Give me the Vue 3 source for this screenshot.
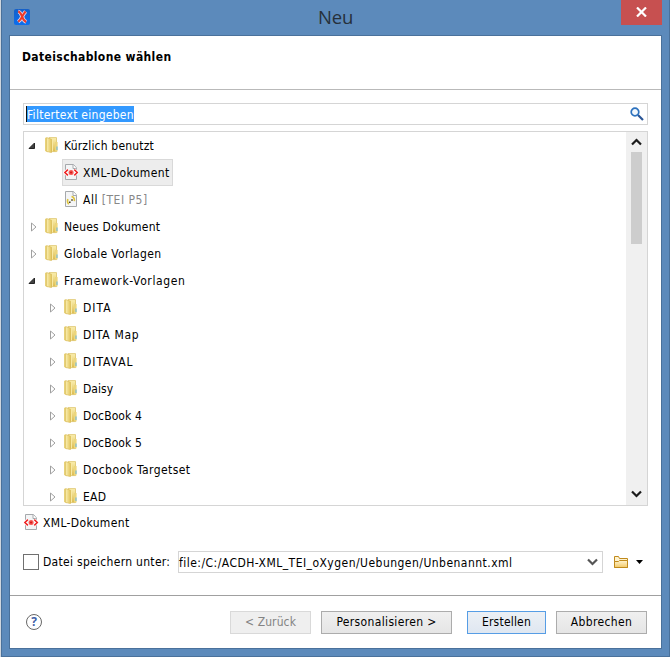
<script setup>
const rows = [
  { label: 'Kürzlich benutzt', level: 0, icon: 'folder', state: 'open', tracking: 0.19 },
  { label: 'XML-Dokument', level: 1, icon: 'xml', selected: true, tracking: 0.35 },
  { label: 'All', note: '[TEI P5]', level: 1, icon: 'tei', tracking: 0.5 },
  { label: 'Neues Dokument', level: 0, icon: 'folder', state: 'closed', tracking: 0.22 },
  { label: 'Globale Vorlagen', level: 0, icon: 'folder', state: 'closed', tracking: 0.34 },
  { label: 'Framework-Vorlagen', level: 0, icon: 'folder', state: 'open', tracking: 0.62 },
  { label: 'DITA', level: 1, icon: 'folder', state: 'closed', tracking: 1 },
  { label: 'DITA Map', level: 1, icon: 'folder', state: 'closed', tracking: 0.7 },
  { label: 'DITAVAL', level: 1, icon: 'folder', state: 'closed', tracking: 0.95 },
  { label: 'Daisy', level: 1, icon: 'folder', state: 'closed', tracking: 0.05 },
  { label: 'DocBook 4', level: 1, icon: 'folder', state: 'closed', tracking: 0.1 },
  { label: 'DocBook 5', level: 1, icon: 'folder', state: 'closed', tracking: 0.1 },
  { label: 'Docbook Targetset', level: 1, icon: 'folder', state: 'closed', tracking: 0.42 },
  { label: 'EAD', level: 1, icon: 'folder', state: 'closed', tracking: 0.3 },
]
</script>

<template>
  <svg class="defs" width="0" height="0">
    <defs>
      <linearGradient id="gFront" x1="0" x2="1" y1="0" y2="0">
        <stop offset="0" stop-color="#fbf0b4" /><stop offset="1" stop-color="#e2c55c" />
      </linearGradient>
      <linearGradient id="gBack" x1="0" x2="0" y1="0" y2="1">
        <stop offset="0" stop-color="#fbefb0" /><stop offset="1" stop-color="#dcbc50" />
      </linearGradient>
      <linearGradient id="gOpen" x1="0" x2="0" y1="0" y2="1">
        <stop offset="0" stop-color="#fff4cf" /><stop offset="1" stop-color="#f3c968" />
      </linearGradient>
      <linearGradient id="gLogo" x1="0" x2="0" y1="0" y2="1">
        <stop offset="0" stop-color="#1560c8" /><stop offset="1" stop-color="#0a6ef0" />
      </linearGradient>
      <symbol id="folder" viewBox="0 0 16 16">
        <path d="M5 .6h7.5v14H5z" fill="url(#gBack)" stroke="#dcc36a" stroke-width=".8" />
        <path d="M11 5h2.6v9.4H11z" fill="#ecd67c" />
        <path d="M13 9.5v3.5" stroke="#62b4e6" />
        <path d="M1 .8h3v14.4L1 14z" fill="#e8d27a" />
        <path d="M2.5.6l5 1.6v13.4l-5-1.2z" fill="url(#gFront)" stroke="#d8bb58" stroke-width=".6" />
        <path d="M8.5 1.5v12.8" stroke="#f8e9a4" />
      </symbol>
      <symbol id="page" viewBox="0 0 16 16">
        <path d="M2.5.5h8l3 3.5v11.5h-11z" fill="#f4f5f6" stroke="#a6a9ac" />
        <path d="M10 .5v4h3.5" fill="#fff" stroke="#a6a9ac" />
      </symbol>
      <symbol id="xml" viewBox="0 0 16 16">
        <use href="#page" width="16" height="16" />
        <path d="M4.9 5.6L1.9 8.5l3 2.9M11.3 5.6l3 2.9-3 2.9" fill="none" stroke="#fff" stroke-width="3" />
        <path d="M4.9 5.6L1.9 8.5l3 2.9M11.3 5.6l3 2.9-3 2.9" fill="none" stroke="#ee2020" stroke-width="1.5" />
        <circle cx="8.1" cy="8.5" r="2.5" fill="#f45a55" /><circle cx="8.1" cy="8.5" r="1.1" fill="#d91818" />
      </symbol>
      <symbol id="tei" viewBox="0 0 16 16">
        <use href="#page" width="16" height="16" />
        <path d="M4.8 8q-1 3 1 5.2" fill="none" stroke="#dec53e" stroke-width="1.6" />
        <path d="M8.5 5.5q3.2.6 2.9 4.6" fill="none" stroke="#ddc13b" stroke-width="1.6" />
        <path d="M6 10.5h1.6v1.6H6zM8.2 8.2h1.6v1.6H8.2z" fill="#4a4422" />
      </symbol>
    </defs>
  </svg>

  <div class="window">
    <header class="titlebar">
      <svg class="logo" width="16" height="16" viewBox="0 0 16 16">
        <rect width="16" height="16" rx="2" fill="url(#gLogo)" />
        <path d="M4.2 2.5Q6.5 3 8 7.4t4.2 5.6M11.6 2.5Q9.4 5 8 8t-3.8 4.8" fill="none" stroke="#dcd6ee" stroke-width="3.8" />
        <path d="M4.2 2.5Q6.5 3 8 7.4t4.2 5.6M11.6 2.5Q9.4 5 8 8t-3.8 4.8" fill="none" stroke="#ee3a28" stroke-width="2" />
      </svg>
      <h1>Neu</h1>
      <button class="close" aria-label="Schließen">
        <svg width="11" height="10" viewBox="0 0 11 10"><path d="M1 .5l9 9M10 .5l-9 9" stroke="#fff" stroke-width="2.2" /></svg>
      </button>
    </header>

    <main class="content">
      <div class="heading">Dateischablone wählen</div>
      <section class="body">
        <div class="filter">
          <span class="marked">Filtertext eingeben</span>
          <svg width="14" height="14" viewBox="0 0 14 14">
            <path d="M8 8l5 5" stroke="#2a5596" stroke-width="2.2" />
            <circle cx="5" cy="5" r="3.8" fill="#f2f8fd" stroke="#2d72be" stroke-width="1.7" />
          </svg>
        </div>

        <div class="tree">
          <div class="rows">
            <div v-for="row in rows" :key="row.label" class="row" :class="{ nested: row.level }">
              <span class="twisty">
                <svg v-if="row.state === 'open'" width="8" height="8" viewBox="0 0 8 8"><path d="M6.5 1v5.5H1z" fill="#404040" stroke="#262626" /></svg>
                <svg v-else-if="row.state" class="closed" width="8" height="10" viewBox="0 0 8 10"><path d="M1.5 1v8l4.5-4z" fill="#fff" stroke="#a0a0a0" /></svg>
              </span>
              <span class="item" :class="{ selected: row.selected }">
                <svg width="16" height="16"><use :href="'#' + row.icon" /></svg>
                <span class="text" :style="{ letterSpacing: row.tracking + 'px' }">{{ row.label }}<span v-if="row.note" class="note">&nbsp;{{ row.note }}</span></span>
              </span>
            </div>
          </div>
          <div class="scrollbar">
            <svg width="11" height="8" viewBox="0 0 11 8"><path d="M1 6.5l4.5-4.5L10 6.5" fill="none" stroke="#1b1b1b" stroke-width="2.2" /></svg>
            <div class="thumb"></div>
            <svg width="11" height="8" viewBox="0 0 11 8"><path d="M1 1.5L5.5 6 10 1.5" fill="none" stroke="#1b1b1b" stroke-width="2.2" /></svg>
          </div>
        </div>

        <div class="current">
          <svg width="16" height="16"><use href="#xml" /></svg>
          <span class="current-name">XML-Dokument</span>
        </div>

        <div class="save">
          <span class="checkbox"></span>
          <span class="save-label">Datei speichern unter:</span>
          <div class="combo">
            <span class="path">file:/C:/ACDH-XML_TEI_oXygen/Uebungen/Unbenannt.xml</span>
            <svg width="11" height="8" viewBox="0 0 11 8"><path d="M1 1.5L5.5 6 10 1.5" fill="none" stroke="#555" stroke-width="2.2" /></svg>
          </div>
          <svg class="browse" width="15" height="13" viewBox="0 0 15 13">
            <path d="M.5 11.5V.5h4l1 2h8v9z" fill="#fff3cf" stroke="#c08a1c" />
            <path d="M.5 11.5v-6h4l1-1h8v7z" fill="url(#gOpen)" stroke="#c08a1c" />
          </svg>
          <svg width="7" height="4" viewBox="0 0 7 4"><path d="M0 0h7L3.5 4z" fill="#000" /></svg>
        </div>
      </section>

      <footer class="footer">
        <span class="help">?</span>
        <button class="btn back" disabled>&lt; Zurück</button>
        <button class="btn custom">Personalisieren &gt;</button>
        <button class="btn create">Erstellen</button>
        <button class="btn cancel">Abbrechen</button>
      </footer>
    </main>
  </div>
</template>

<style>
body { background: #cfd6de; }
</style>

<style scoped>
.defs { position: absolute; }
.window {
  box-sizing: border-box;
  width: 669px;
  height: 657px;
  margin-left: 1px;
  padding: 0 7px 7px;
  border: 1px solid #4a719b;
  border-top: 0;
  background: #5c8abb;
  font: 12px/15px "DejaVu Sans Condensed", "DejaVu Sans", sans-serif;
  font-stretch: condensed;
  color: #000;
  white-space: nowrap;
}
.titlebar { display: flex; align-items: flex-start; height: 35px; padding-left: 5px; }
.logo { margin-top: 9px; }
h1 { flex: 1; margin: 4px 0 0 288px; font: 18.5px/26px "Open Sans", sans-serif; letter-spacing: -0.2px; color: #26303a; }
.close { display: flex; align-items: center; justify-content: center; width: 41px; height: 25px; padding: 0 0 2px; border: 0; background: #c75050; }
.content { box-sizing: border-box; display: flex; flex-direction: column; height: 614px; border: 1px solid #4a719b; background: #fff; }
.heading { box-sizing: border-box; height: 54px; padding: 14px 12px 0; border-bottom: 1px solid #b9b9b9; font-weight: bold; letter-spacing: 0.38px; }
.body { padding: 13px 13px 0; }
.filter { box-sizing: border-box; display: flex; align-items: center; justify-content: space-between; height: 22px; padding: 0 3px 0 2px; border: 1px solid #d5d5d5; }
.marked { height: 16px; border-left: 1px solid #111; background: #3399ff; color: #fff; line-height: 18px; letter-spacing: 0.27px; }
.tree { box-sizing: border-box; display: flex; height: 375px; margin-top: 6px; border: 1px solid #d5d5d5; overflow: hidden; }
.rows { flex: 1; }
.row { display: flex; height: 27px; }
.nested { padding-left: 19px; }
.twisty { box-sizing: border-box; display: flex; align-items: center; justify-content: center; width: 19px; height: 27px; padding-right: 3px; }
.closed { margin-left: 3px; }
.item { box-sizing: border-box; display: flex; align-items: center; gap: 3px; height: 27px; padding: 0 2px 1px 1px; border: 1px solid transparent; }
.item svg { margin: 0 1px 0 -1px; }
.text { padding-top: 2px; }
.selected { border-color: #d9d9d9; background: #ededed; }
.note { color: #888; }
.scrollbar { display: flex; flex-direction: column; align-items: center; width: 21px; padding: 6px 0 7px; box-sizing: border-box; background: #f0f0f0; }
.thumb { width: 11px; height: 92px; margin: 6px 0 auto; background: #cdcdcd; }
.current { display: flex; align-items: center; gap: 4px; height: 16px; margin-top: 8px; }
.current-name { padding-top: 2px; letter-spacing: 0.35px; }
.save { display: flex; align-items: center; height: 22px; margin-top: 21px; }
.checkbox { box-sizing: border-box; width: 16px; height: 16px; border: 1px solid #707070; }
.save-label { width: 135px; margin-left: 4px; letter-spacing: 0.3px; }
.combo { box-sizing: border-box; display: flex; align-items: center; justify-content: space-between; width: 425px; height: 22px; padding: 0 4px 0 0; border: 1px solid #d5d5d5; }
.path { padding-top: 2px; letter-spacing: 0.47px; }
.browse { margin: 0 7px 0 11px; }
.footer { display: flex; align-items: flex-start; flex: 1; margin-top: 22px; padding: 15px 0 0 16px; border-top: 1px solid #a0a0a0; }
.help { box-sizing: border-box; flex: none; width: 16px; height: 16px; margin: 3px 188px 0 0; border: 1px solid #686868; border-radius: 50%; color: #3f5fa8; font: bold 12px/14px "Open Sans", sans-serif; text-align: center; }
.btn { box-sizing: border-box; flex: none; height: 23px; padding: 0; border: 1px solid #acacac; background: linear-gradient(#f0f0f0, #e5e5e5); color: #000; font: inherit; font-stretch: condensed; letter-spacing: 0.35px; }
.back { width: 81px; border-color: #d9d9d9; background: #efefef; color: #838383; letter-spacing: 0.1px; }
.custom { width: 131px; margin-left: 10px; }
.create { width: 79px; margin-left: 15px; border-color: #569de5; background: linear-gradient(#ecf0f5, #dfe7f1); letter-spacing: 0.2px; }
.cancel { width: 91px; margin-left: 10px; }
</style>
